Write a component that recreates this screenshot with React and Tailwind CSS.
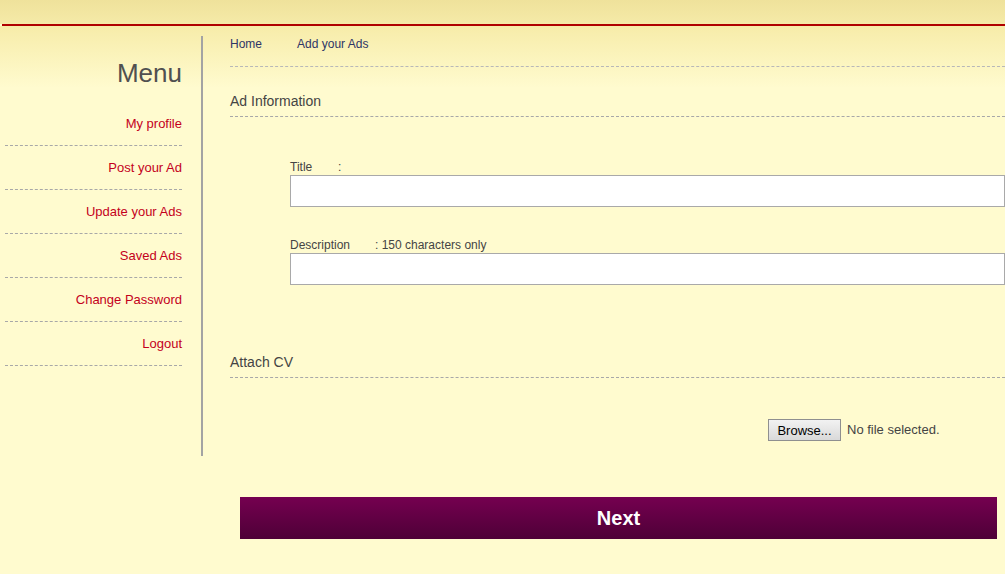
import React from "react";

const MENU = ["My profile", "Post your Ad", "Update your Ads", "Saved Ads", "Change Password", "Logout"];

function SectionTitle({ children, className }) {
  return (
    <div className={"border-b border-dashed border-[#a8a8a8] pb-[7px] text-[14px] leading-4 text-[#444] " + className}>
      {children}
    </div>
  );
}

export default function App() {
  return (
    <div className="min-h-screen w-full bg-[#fffbcf] font-['Liberation_Sans',Arial,sans-serif]">
      <div className="h-6 bg-[linear-gradient(to_bottom,#efe29b,#f5eaa8)]" />
      <div className="ml-[2px] h-[2px] bg-[#b00000]" />

      <div className="bg-[linear-gradient(to_bottom,#f7eca9,#fffbcf_62px)] pt-[10px]">
        <div className="flex">
          {/* sidebar */}
          <div className="h-[420px] w-[203px] shrink-0 border-r-2 border-[#a3a3a3]">
            <div className="mt-[22px] h-[44px] pr-[19px] text-right text-[26px] leading-[30px] text-[#505050]">Menu</div>
            <ul className="ml-[5px] mr-[19px]">
              {MENU.map((m) => (
                <li
                  key={m}
                  className="flex h-[44px] items-center justify-end border-b border-dashed border-[#a8a8a8] text-[13px] text-[#c4001c]"
                >
                  {m}
                </li>
              ))}
            </ul>
          </div>

          {/* main */}
          <div className="flex-1 pl-[27px]">
            <div className="flex h-[31px] gap-[35px] border-b border-dashed border-[#b8b8b8] text-[12px] leading-4 text-[#2e3566]">
              <span>Home</span>
              <span>Add your Ads</span>
            </div>

            <SectionTitle className="mt-[26px]">Ad Information</SectionTitle>

            <div className="pl-[60px] text-[12px] text-[#444]">
              <div className="mt-[42px] flex leading-4">
                <span className="w-[48px]">Title</span>
                <span>:</span>
              </div>
              <input className="block h-[32px] w-[715px] border border-[#a9a9a9] bg-white outline-none" />

              <div className="mt-[30px] flex leading-4">
                <span className="w-[85px]">Description</span>
                <span>: 150 characters only</span>
              </div>
              <input className="block h-[32px] w-[715px] border border-[#a9a9a9] bg-white outline-none" />
            </div>

            <SectionTitle className="mt-[69px]">Attach CV</SectionTitle>

            <div className="mt-[41px] flex items-center pl-[538px]">
              <button className="h-[22px] w-[73px] border border-[#8f8f8f] bg-[linear-gradient(to_bottom,#f2f2f2,#d9d9d9)] text-[13px] leading-none text-black">
                Browse...
              </button>
              <span className="ml-[6px] text-[13px] text-[#444]">No file selected.</span>
            </div>
          </div>
        </div>

        <div className="ml-[240px] mt-[41px] flex h-[42px] w-[757px] items-center justify-center bg-[linear-gradient(to_bottom,#750050,#4e0037)] text-[20px] font-bold text-white">
          Next
        </div>
      </div>
    </div>
  );
}
